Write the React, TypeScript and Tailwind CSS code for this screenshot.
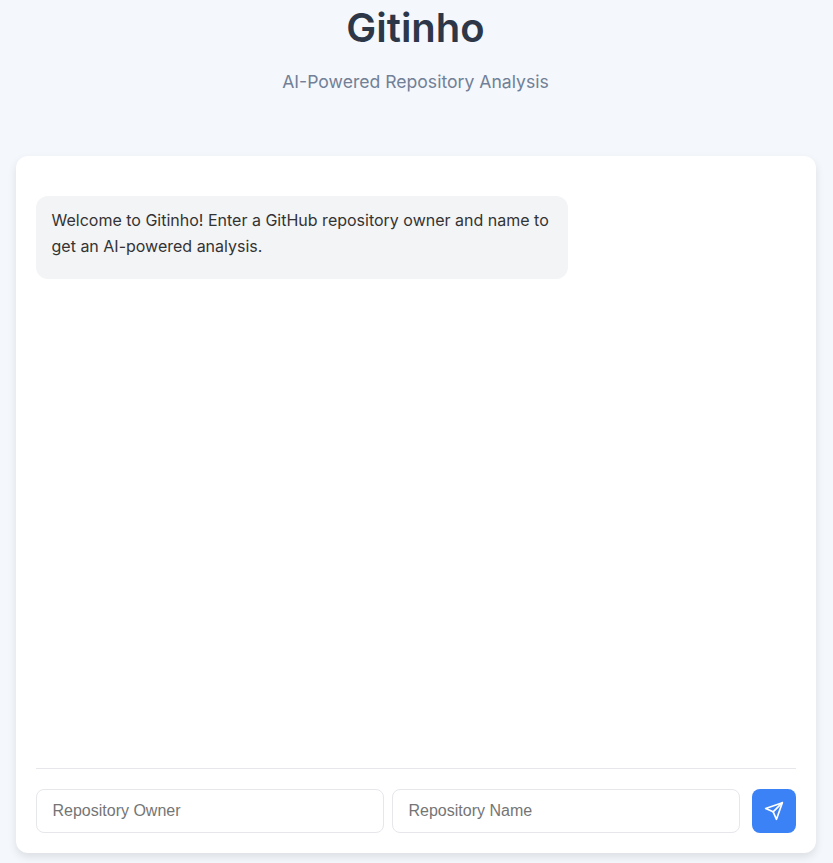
import React from "react";

function Header() {
  return (
    <header className="mr-[2px] flex flex-col items-center text-center">
      <h1 className="h-14 text-[40px] leading-14 font-semibold text-[#2d3748]">Gitinho</h1>
      <p className="mt-3 text-[17.6px] leading-7 text-[#718096]">AI-Powered Repository Analysis</p>
    </header>
  );
}

function RepoInput({ placeholder }: { placeholder: string }) {
  return (
    <input
      type="text"
      placeholder={placeholder}
      className="h-11 min-w-0 flex-1 rounded-lg border border-[#e5e7eb] bg-white px-[15.5px] font-['Liberation_Sans',Arial,sans-serif] text-base text-[#2d3748] outline-none placeholder:text-[#757575]"
    />
  );
}

function PaperPlane() {
  return (
    <svg
      width="20"
      height="20"
      viewBox="0 0 24 24"
      fill="none"
      stroke="currentColor"
      strokeWidth="2"
      strokeLinejoin="round"
      strokeLinecap="round"
    >
      <path d="M22 2 11 13" />
      <path d="M22 2 15 22 11 13 2 9Z" />
    </svg>
  );
}

export default function App() {
  return (
    <div className="h-[863px] overflow-hidden bg-[#f4f7fc] px-4 font-['Inter',sans-serif]">
      <Header />
      <main className="mt-[60px] mr-[1px] flex h-[697px] flex-col rounded-xl bg-white p-5 shadow-[0_4px_8px_rgba(0,0,0,0.1)]">
        <section className="flex-1 pt-5">
          <div className="h-[83px] w-[532px] rounded-xl bg-[#f3f4f6] px-[15.5px] py-3 text-base leading-[25.6px] text-[#333333]">
            Welcome to Gitinho! Enter a GitHub repository owner and name to get an AI-powered analysis.
          </div>
        </section>
        <form className="flex border-t border-[#e5e7eb] pt-5" onSubmit={(e) => e.preventDefault()}>
          <div className="flex min-w-0 flex-1 gap-2">
            <RepoInput placeholder="Repository Owner" />
            <RepoInput placeholder="Repository Name" />
          </div>
          <button
            type="submit"
            aria-label="Send"
            className="ml-3 flex size-11 items-center justify-center rounded-lg bg-[#3b82f6] text-white"
          >
            <PaperPlane />
          </button>
        </form>
      </main>
    </div>
  );
}
